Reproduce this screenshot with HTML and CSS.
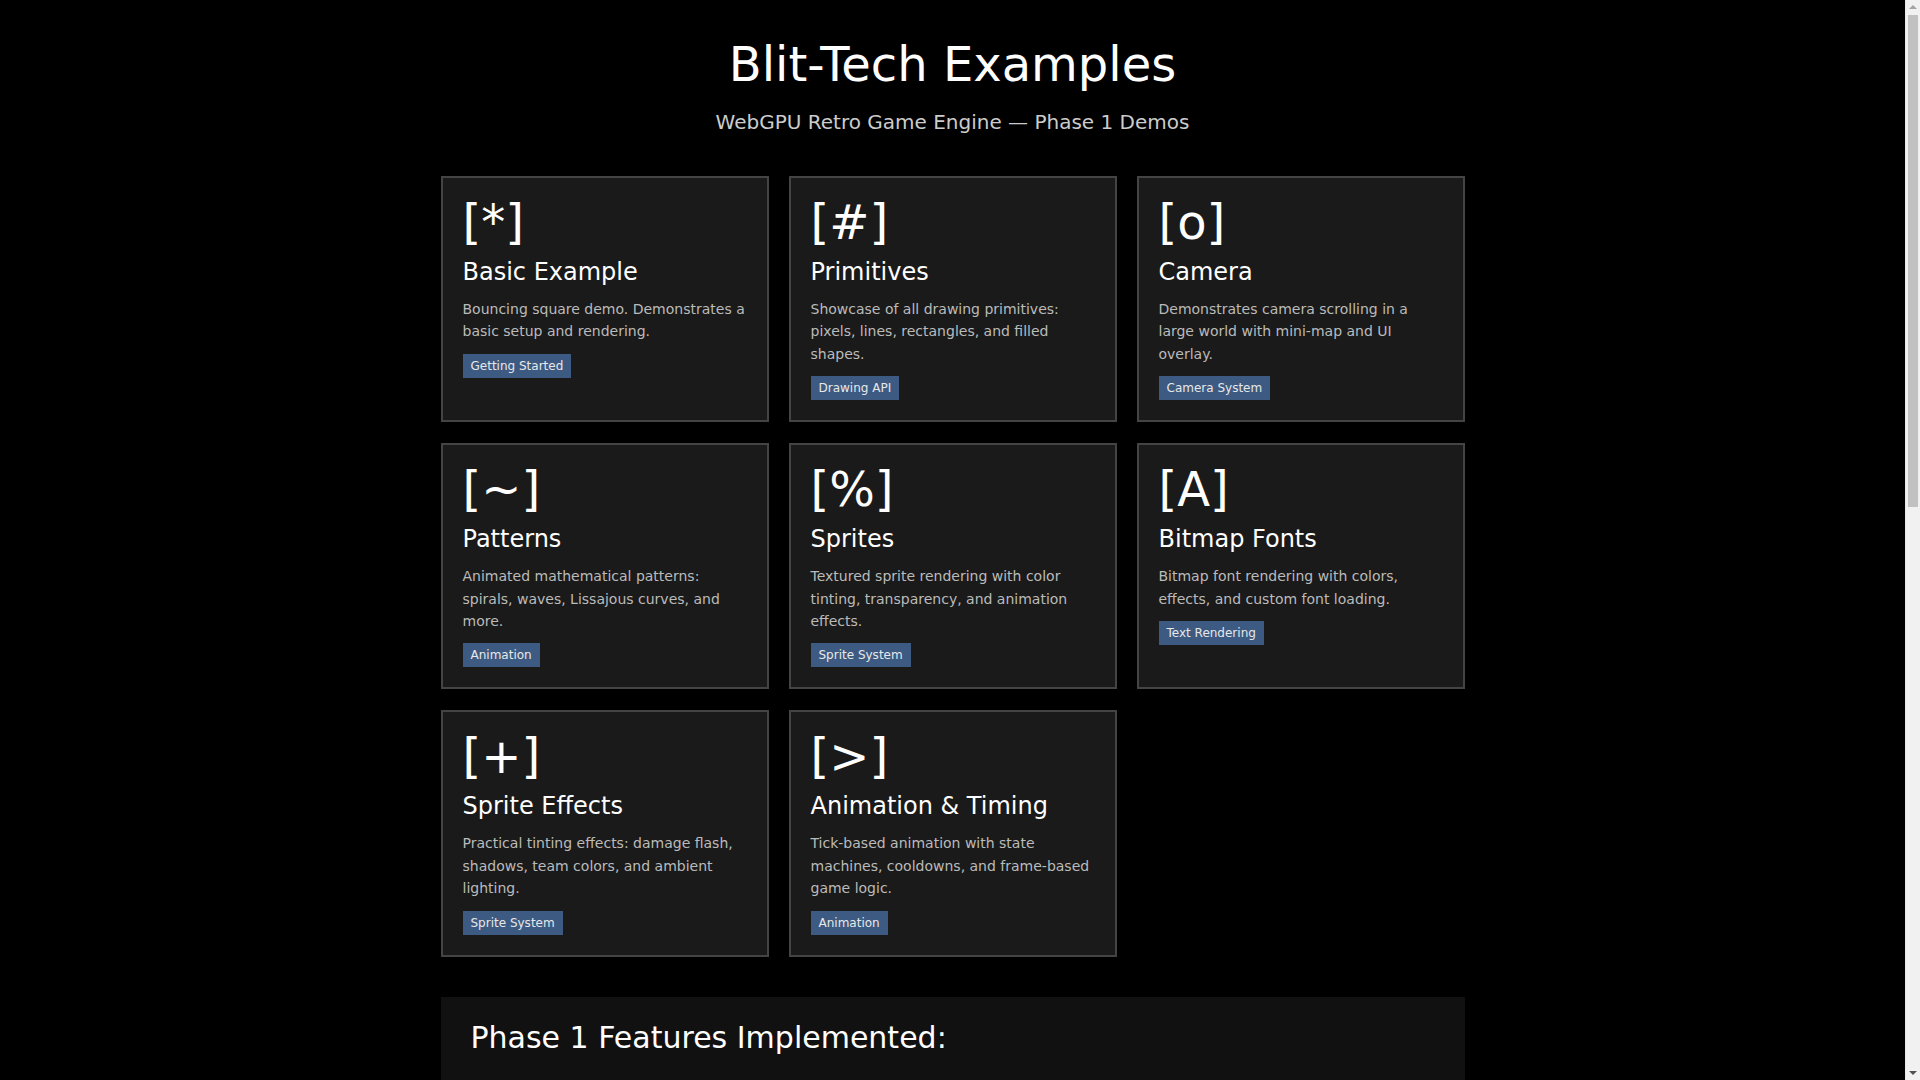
FILE: index.html
```html
<!DOCTYPE html>
<html lang="en">
<head>
    <meta charset="UTF-8">
    <meta name="viewport" content="width=device-width, initial-scale=1.0">
    <title>Blit-Tech Examples</title>
    <link rel="stylesheet" href="styles.css">
</head>
<body>
    <div class="page">
        <header class="page-header">
            <h1>Blit-Tech Examples</h1>
            <p class="subtitle">WebGPU Retro Game Engine — Phase 1 Demos</p>
        </header>

        <div class="examples-grid">
            <a class="example-card" href="#basic">
                <div class="example-icon">[*]</div>
                <h2>Basic Example</h2>
                <p>Bouncing square demo. Demonstrates a basic setup and rendering.</p>
                <span class="tag">Getting Started</span>
            </a>
            <a class="example-card" href="#primitives">
                <div class="example-icon">[#]</div>
                <h2>Primitives</h2>
                <p>Showcase of all drawing primitives: pixels, lines, rectangles, and filled shapes.</p>
                <span class="tag">Drawing API</span>
            </a>
            <a class="example-card" href="#camera">
                <div class="example-icon">[o]</div>
                <h2>Camera</h2>
                <p>Demonstrates camera scrolling in a large world with mini-map and UI overlay.</p>
                <span class="tag">Camera System</span>
            </a>
            <a class="example-card" href="#patterns">
                <div class="example-icon">[~]</div>
                <h2>Patterns</h2>
                <p>Animated mathematical patterns: spirals, waves, Lissajous curves, and more.</p>
                <span class="tag">Animation</span>
            </a>
            <a class="example-card" href="#sprites">
                <div class="example-icon">[%]</div>
                <h2>Sprites</h2>
                <p>Textured sprite rendering with color tinting, transparency, and animation effects.</p>
                <span class="tag">Sprite System</span>
            </a>
            <a class="example-card" href="#fonts">
                <div class="example-icon">[A]</div>
                <h2>Bitmap Fonts</h2>
                <p>Bitmap font rendering with colors, effects, and custom font loading.</p>
                <span class="tag">Text Rendering</span>
            </a>
            <a class="example-card" href="#sprite-effects">
                <div class="example-icon">[+]</div>
                <h2>Sprite Effects</h2>
                <p>Practical tinting effects: damage flash, shadows, team colors, and ambient lighting.</p>
                <span class="tag">Sprite System</span>
            </a>
            <a class="example-card" href="#animation">
                <div class="example-icon">[&gt;]</div>
                <h2>Animation &amp; Timing</h2>
                <p>Tick-based animation with state machines, cooldowns, and frame-based game logic.</p>
                <span class="tag">Animation</span>
            </a>
        </div>

        <!-- Feature list -->
        <section class="features">
            <h2>Phase 1 Features Implemented:</h2>

            <h3>Core</h3>
            <ul>
                <li>WebGPU device setup with automatic canvas scaling</li>
                <li>Fixed 60 ticks per second update loop</li>
                <li>Separate update and render phases</li>
                <li>Pixel-perfect integer scaling</li>
                <li>Configurable display resolution</li>
                <li>Keyboard and mouse input polling</li>
            </ul>

            <h3>Drawing</h3>
            <ul>
                <li>Pixels, lines and rectangles</li>
                <li>Filled and outlined shapes</li>
                <li>Clear color and per-call colors</li>
                <li>Batched primitive rendering</li>
                <li>Camera offset for world-space drawing</li>
                <li>UI overlay drawn in screen space</li>
            </ul>

            <h3>Sprites &amp; Text</h3>
            <ul>
                <li>Sprite sheet loading from PNG</li>
                <li>Source rectangles and frame animation</li>
                <li>Color tinting and alpha transparency</li>
                <li>Bitmap font loading and text rendering</li>
                <li>Text colors and simple text effects</li>
                <li>Text measurement for alignment</li>
            </ul>

            <h3>Timing</h3>
            <ul>
                <li>Tick counter for deterministic logic</li>
                <li>Cooldowns and timers</li>
                <li>State machine helpers</li>
                <li>Frame-based animation playback</li>
            </ul>
        </section>

        <footer class="page-footer">
            <p>Open any example above to run it in your browser. A WebGPU capable browser is required.</p>
        </footer>
    </div>

    <!-- window scrollbar -->
    <div class="scrollbar" aria-hidden="true">
        <span class="scroll-arrow up"></span>
        <span class="scroll-thumb"></span>
        <span class="scroll-arrow down"></span>
    </div>
</body>
</html>
```

FILE: styles.css
```css
* {
    box-sizing: border-box;
}

body {
    margin: 0;
    padding-right: 15px;
    background: #000;
    color: #fff;
    font-family: "DejaVu Sans", "Liberation Sans", sans-serif;
}

.page {
    max-width: 1024px;
    margin: 0 auto;
    padding: 36px 0 60px;
}

/* Header */
.page-header {
    text-align: center;
    margin-bottom: 42px;
}

.page-header h1 {
    margin: 0;
    font-size: 48px;
    font-weight: normal;
}

.subtitle {
    margin: 18px 0 0;
    font-size: 20px;
    color: #ccc;
}

/* Example cards */
.examples-grid {
    display: grid;
    grid-template-columns: repeat(3, 1fr);
    gap: 21px 20px;
}

.example-card {
    display: block;
    background: #1a1a1a;
    border: 2px solid #444;
    padding: 20px;
    color: #fff;
    text-decoration: none;
}

.example-icon {
    font-size: 48px;
    line-height: 1;
    margin-bottom: 12px;
}

.example-card h2 {
    margin: 0 0 12px;
    font-size: 24px;
    font-weight: normal;
}

.example-card p {
    margin: 0 0 11px;
    font-size: 14px;
    line-height: 1.6;
    color: #bbb;
}

.tag {
    display: inline-block;
    background: #3c5a82;
    color: #e8e8e8;
    font-size: 12px;
    line-height: 16px;
    padding: 4px 8px;
}

/* Features */
.features {
    margin-top: 40px;
    background: #111;
    padding: 23px 30px 30px;
}

.features h2 {
    margin: 0 0 20px;
    font-size: 30px;
    font-weight: normal;
}

.features h3 {
    margin: 24px 0 10px;
    font-size: 20px;
    font-weight: normal;
    color: #ddd;
}

.features ul {
    margin: 0;
    padding-left: 24px;
}

.features li {
    font-size: 16px;
    line-height: 2;
    color: #bbb;
}

.page-footer {
    margin-top: 40px;
    text-align: center;
    font-size: 14px;
    color: #888;
}

/* Scrollbar */
.scrollbar {
    position: fixed;
    top: 0;
    right: 0;
    bottom: 0;
    width: 15px;
    background: #f1f1f1;
    border-left: 1px solid #e8e8e8;
}

.scroll-thumb {
    position: absolute;
    top: 15px;
    left: 2px;
    right: 2px;
    height: 492px;
    background: #c1c1c1;
}

.scroll-arrow {
    position: absolute;
    left: 3px;
    width: 0;
    height: 0;
    border-left: 4px solid transparent;
    border-right: 4px solid transparent;
}

.scroll-arrow.up {
    top: 5px;
    border-bottom: 4px solid #a3a3a3;
}

.scroll-arrow.down {
    bottom: 5px;
    border-top: 4px solid #505050;
}
```
